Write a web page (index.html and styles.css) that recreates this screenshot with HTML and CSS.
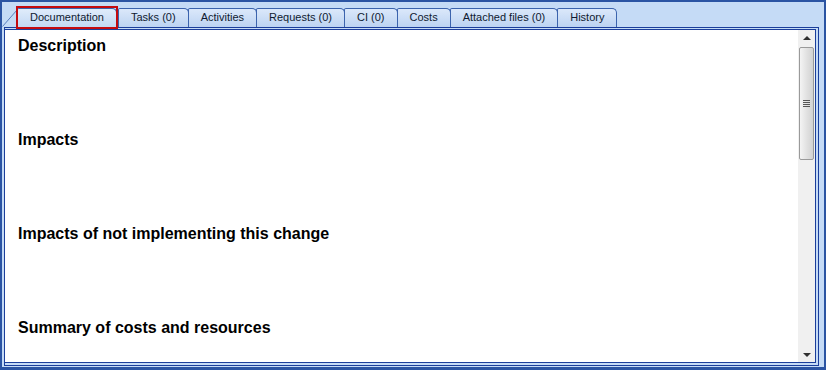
FILE: index.html
```html
<!DOCTYPE html>
<html>
<head>
<meta charset="utf-8">
<link rel="stylesheet" href="styles.css">
</head>
<body>
<div class="frame">
  <div class="tabstrip">
    <svg class="slant" width="16" height="22" viewBox="0 0 16 22"><path d="M0.5 21.5 L15 5" stroke="#5a7fbf" stroke-width="1" fill="none"/></svg>
    <div class="tab active">Documentation</div>
    <div class="tab">Tasks (0)</div>
    <div class="tab">Activities</div>
    <div class="tab">Requests (0)</div>
    <div class="tab">CI (0)</div>
    <div class="tab">Costs</div>
    <div class="tab">Attached files (0)</div>
    <div class="tab">History</div>
  </div>
  <div class="panel">
    <div class="inner">
      <div class="content">
        <h2 class="section">Description</h2>
        <h2 class="section">Impacts</h2>
        <h2 class="section">Impacts of not implementing this change</h2>
        <h2 class="section">Summary of costs and resources</h2>
      </div>
      <div class="scrollbar">
        <div class="arrow up"></div>
        <div class="thumb"><span class="grip"></span></div>
        <div class="track"></div>
        <div class="arrow down"></div>
      </div>
    </div>
  </div>
</div>
</body>
</html>
```

FILE: styles.css
```css
html, body {
  margin: 0;
  padding: 0;
  background: #ffffff;
}
.frame {
  width: 826px;
  height: 370px;
  box-sizing: border-box;
  border: 2px solid #2b54a3;
  border-bottom-width: 3px;
  background: #c5dbf6;
  display: flex;
  flex-direction: column;
  font-family: "Liberation Sans", Arial, sans-serif;
}
.tabstrip {
  display: flex;
  align-items: flex-end;
  height: 25px;
  flex-shrink: 0;
  position: relative;
  z-index: 1;
}
.slant {
  display: block;
  margin-right: -1px;
}
.tab {
  height: 19px;
  box-sizing: border-box;
  padding: 0 12px 0 12px;
  font-size: 11px;
  line-height: 17px;
  color: #0f1a30;
  background: linear-gradient(#dbe8fa, #bcd3f2);
  border: 1px solid #3b63ad;
  border-bottom: none;
  border-radius: 2px 5px 0 0;
  margin-right: -1px;
  position: relative;
}
.tab.active {
  background: linear-gradient(#e0ecfb, #c2d8f4);
  margin-right: 1px;
}
.tab.active::after {
  content: "";
  position: absolute;
  top: -3px;
  left: -2px;
  right: -2px;
  bottom: -2px;
  border: 2px solid #c40a10;
}
.panel {
  flex: 1;
  min-height: 0;
  margin: 0 5px 1px 2px;
  border: 1px solid #1b3e9b;
  padding: 1px 2px 2px 0;
  display: flex;
  background: #c5dbf6;
}
.inner {
  flex: 1;
  min-height: 0;
  display: flex;
  border: 1px solid #1b3e9b;
  border-left: none;
  background: #ffffff;
  overflow: hidden;
}
.content {
  flex: 1;
  padding: 5px 0 0 13px;
}
.section {
  margin: 0 0 73px 0;
  font-size: 16px;
  line-height: 21px;
  font-weight: bold;
  color: #000000;
}
.scrollbar {
  width: 17px;
  display: flex;
  flex-direction: column;
  background: #f0f0f0;
}
.arrow {
  height: 17px;
  position: relative;
}
.arrow::after {
  content: "";
  position: absolute;
  left: 5px;
  width: 0;
  height: 0;
  border-left: 4px solid transparent;
  border-right: 4px solid transparent;
}
.arrow.up::after {
  top: 6px;
  border-bottom: 4px solid #303030;
}
.arrow.down::after {
  top: 8px;
  border-top: 4px solid #303030;
}
.thumb {
  height: 113px;
  margin: 0 1px;
  box-sizing: border-box;
  border: 1px solid #9a9a9a;
  border-radius: 2px;
  background: linear-gradient(90deg, #f4f4f4, #e2e2e2 50%, #d2d2d2);
  display: flex;
  align-items: center;
  justify-content: center;
}
.grip {
  width: 7px;
  height: 7px;
  background: repeating-linear-gradient(#555 0 1px, transparent 1px 2px);
}
.track {
  flex: 1;
}
```
